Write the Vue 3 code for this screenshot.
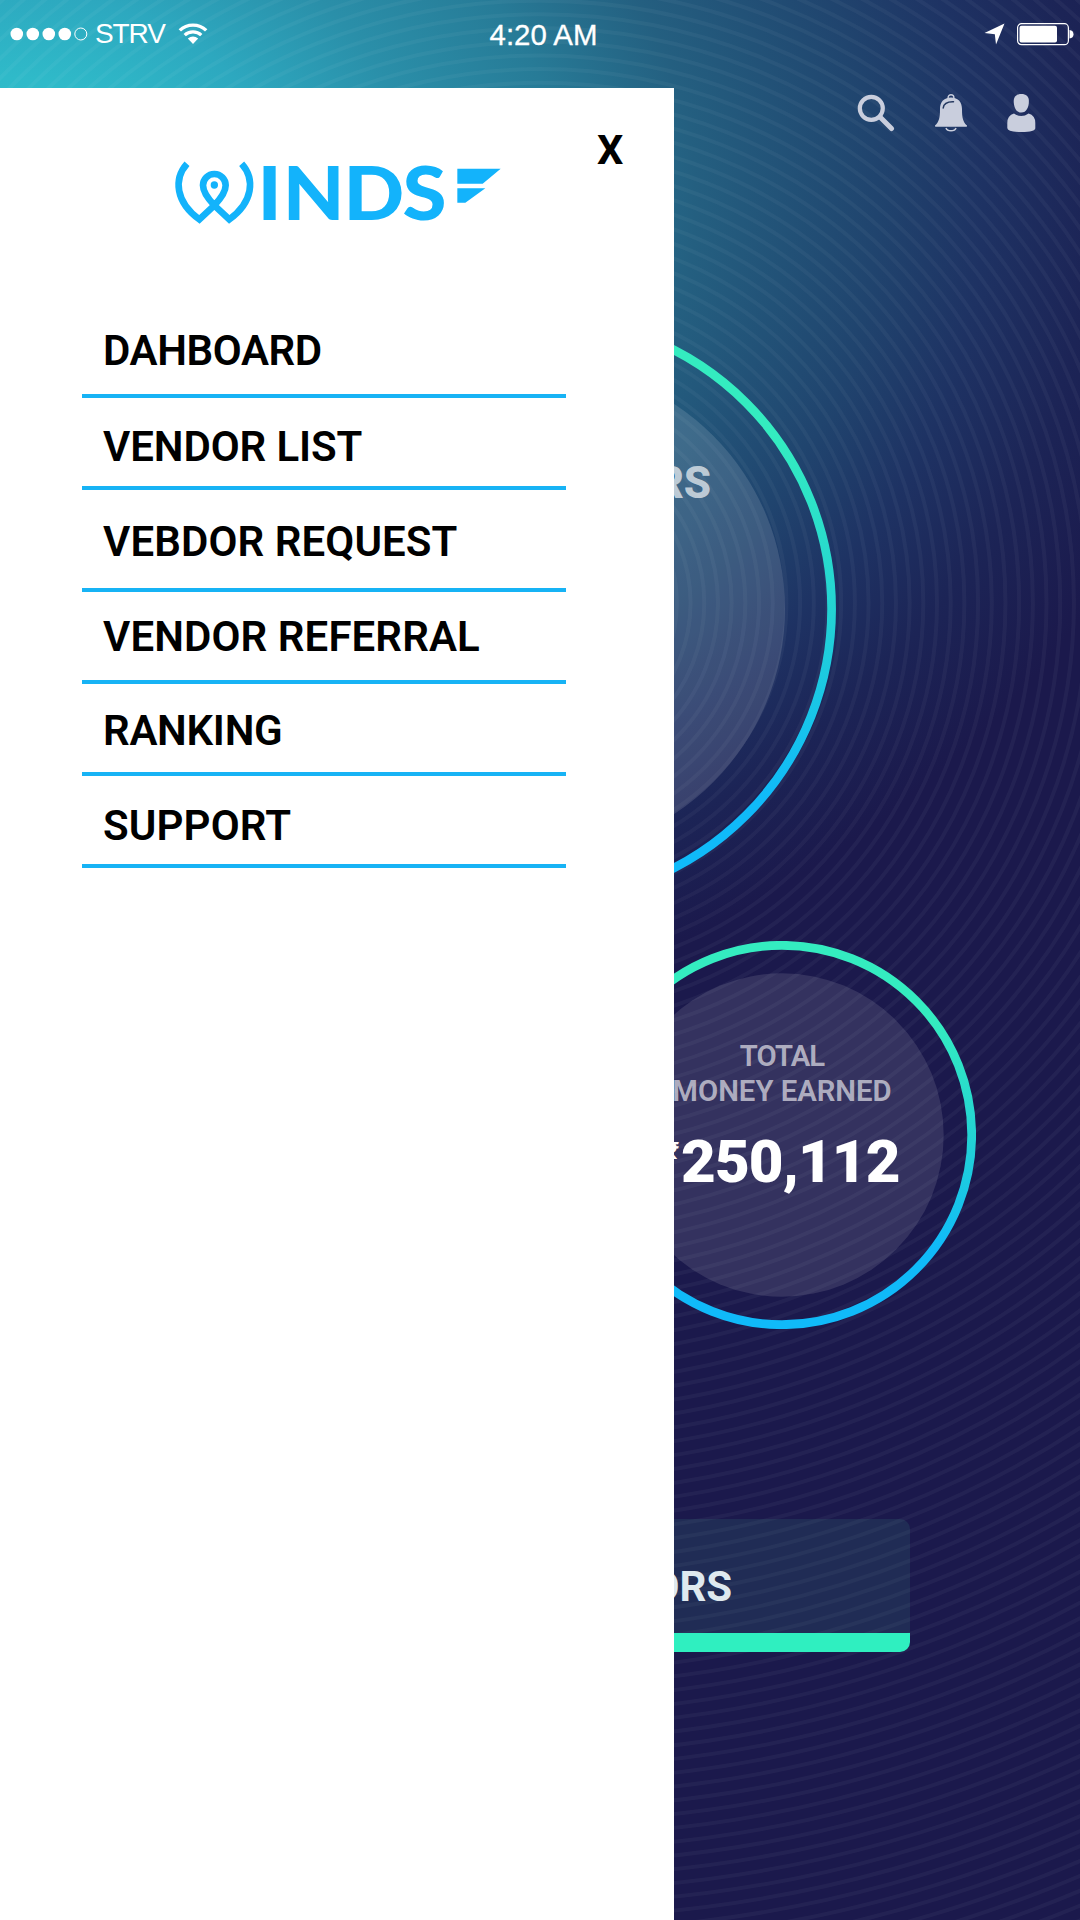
<script setup>
const menu = [
  { label: 'DAHBOARD', height: 88, top: 16, spacing: -0.4 },
  { label: 'VENDOR LIST', height: 92, top: 23.5, spacing: -0.1 },
  { label: 'VEBDOR REQUEST', height: 102, top: 27, spacing: 0.1 },
  { label: 'VENDOR REFERRAL', height: 92, top: 19.5, spacing: 0.1 },
  { label: 'RANKING', height: 92, top: 22, spacing: -0.3 },
  { label: 'SUPPORT', height: 92, top: 24.5, spacing: 0.15 }
]
const ripples = Array.from({ length: 108 }, (_, i) => (i + 1) * 13.69)
</script>

<template>
  <div class="screen">
    <svg class="ripples" width="1080" height="1920" viewBox="0 0 1080 1920">
      <circle v-for="r in ripples" :key="r" cx="540" cy="603" :r="r" />
    </svg>

    <header class="status">
      <div class="carrier">
        <svg width="80" height="16" viewBox="0 0 80 16">
          <circle v-for="n in 4" :key="n" :cx="n * 16 - 9.2" cy="8" r="6.3" fill="#fff" />
          <circle cx="70.8" cy="8" r="6" fill="none" stroke="#fff" stroke-width="1" />
        </svg>
        <span class="net">STRV</span>
        <svg width="30" height="22" viewBox="0 0 30 22">
          <path d="M1.8 7.4C9 .3 21 .3 28.2 7.4" fill="none" stroke="#fff" stroke-width="3.4" />
          <path d="M6.7 12.2C11.2 7.8 18.8 7.8 23.3 12.2" fill="none" stroke="#fff" stroke-width="3.2" />
          <path d="M9.8 15.5Q15 11.7 20.2 15.5L15 21Z" fill="#fff" />
        </svg>
      </div>
      <span class="clock">4:20 AM</span>
      <div class="power">
        <svg width="22" height="22" viewBox="0 0 22 22"><path d="M20.5 .5 12 21.5 10.8 11.2 .5 10Z" fill="#fff" /></svg>
        <svg width="58" height="24" viewBox="0 0 58 24">
          <rect x="1.6" y="1.7" width="50.8" height="21" rx="4" fill="none" stroke="#fff" stroke-width="1.2" />
          <rect x="3.5" y="3.8" width="37.5" height="16.8" rx="2" fill="#fff" />
          <path d="M53.5 8q4 .6 4 4.3t-4 4.3Z" fill="#fff" />
        </svg>
      </div>
    </header>

    <main class="dash">
      <nav class="tools">
        <svg width="38" height="40" viewBox="0 0 38 40">
          <circle cx="14.3" cy="15.3" r="11.5" fill="none" stroke="#c9cedd" stroke-width="4.2" />
          <path d="M23.5 24.5 34.5 35.5" stroke="#c9cedd" stroke-width="5" stroke-linecap="round" />
        </svg>
        <svg width="34" height="40" viewBox="0 0 34 40">
          <circle cx="17" cy="4.6" r="2.9" fill="none" stroke="#c9cedd" stroke-width="1.4" />
          <path d="M17 4.5C9.5 4.5 6 9.5 6 16C6 25 5 29 1 32.5Q.5 33.8 2 33.8H32Q33.5 33.8 33 32.5C29 29 28 25 28 16C28 9.5 24.5 4.5 17 4.5Z" fill="#c9cedd" />
          <path d="M9.2 15Q10 8.5 19.5 8.8" fill="none" stroke="#24385f" stroke-width="1.5" stroke-linecap="round" />
          <path d="M12 35Q13 37.8 17 37.8T22 35" fill="none" stroke="#c9cedd" stroke-width="1.5" />
        </svg>
        <svg width="30" height="40" viewBox="0 0 30 40">
          <path d="M15.3 1C20 1 22.9 3.3 22.9 8C22.9 14 20.5 19.6 15.3 19.6S7.7 14 7.7 8C7.7 3.3 10.6 1 15.3 1Z" fill="#c9cedd" />
          <path d="M8 20.5Q15.3 25.5 22.6 20.5Q29.3 22.5 29.3 30V35Q29.3 39 15.3 39T1.3 35V30Q1.3 22.5 8 20.5Z" fill="#c9cedd" />
        </svg>
      </nav>

      <section class="dial big">
        <svg class="ring" viewBox="0 0 592 592">
          <defs>
            <linearGradient id="ringBig" x1="0" y1="0" x2="0" y2="1">
              <stop offset=".2" stop-color="#34ecc0" /><stop offset=".5" stop-color="#23d3d3" /><stop offset=".82" stop-color="#10baf9" />
            </linearGradient>
          </defs>
          <circle cx="296" cy="296" r="291.6" fill="none" stroke="url(#ringBig)" stroke-width="8.7" />
          <circle cx="296" cy="296" r="245" fill="#fff" fill-opacity=".13" />
        </svg>
        <h2>TOTAL VENDORS</h2>
      </section>

      <section class="dial small">
        <svg class="ring" viewBox="0 0 388 388">
          <defs>
            <linearGradient id="ringSmall" x1="0" y1="0" x2="0" y2="1">
              <stop offset=".2" stop-color="#34ecc0" /><stop offset=".5" stop-color="#23d3d3" /><stop offset=".8" stop-color="#10baf9" />
            </linearGradient>
          </defs>
          <circle cx="194" cy="194" r="189.7" fill="none" stroke="url(#ringSmall)" stroke-width="8.7" />
          <circle cx="194" cy="194" r="161.7" fill="#fff" fill-opacity=".11" />
        </svg>
        <p class="caption"><span class="tight">TOTAL</span><br />MONEY EARNED</p>
        <p class="amount"><span class="cur">₹</span><b>250,112</b></p>
      </section>

      <button class="cta">VIEW ALL VENDORS</button>
    </main>

    <aside class="drawer">
      <div class="top">
        <svg class="logo" width="330" height="66" viewBox="40 118 990 198">
          <path d="M79 129C38 175 45 245 116 296L161 254C185 229 195 212 195 194A34 34 0 0 0 127 194C127 212 137 229 161 254L206 296C277 245 284 175 243 129" fill="none" stroke="#13b3fb" stroke-width="20" />
          <circle cx="161" cy="193" r="11" fill="#13b3fb" />
          <text class="word" y="297" x="270 341 510 675" transform="scale(1.075 1)">INDS</text>
          <path d="M890 144H1020L966 189H890ZM890 203H974L914 246H890Z" fill="#13b3fb" />
        </svg>
        <span class="close">X</span>
      </div>
      <ul class="menu">
        <li v-for="m in menu" :key="m.label" :style="{ height: m.height + 'px', paddingTop: m.top + 'px', letterSpacing: m.spacing + 'px' }">{{ m.label }}</li>
      </ul>
    </aside>
  </div>
</template>

<style>
body { margin: 0; }
</style>

<style scoped>
* { box-sizing: border-box; }
.screen {
  position: relative;
  width: 1080px;
  height: 1920px;
  overflow: hidden;
  display: flex;
  flex-direction: column;
  font-family: Roboto, sans-serif;
  background: radial-gradient(ellipse 1200px 875px at 0 200px, #30c0cd 0, #2fbac9 14%, #2da8bf 24%, #2a8fa9 35%, #277b97 47%, #245f80 58%, #20446e 73%, #1e3263 82%, #1c2456 91%, #1b194c 102%);
}
.ripples { position: absolute; left: 0; top: 0; }
.ripples circle { fill: none; stroke: #fff; stroke-opacity: .038; stroke-width: 4; }
svg { display: block; flex: none; }
.status {
  position: relative;
  height: 88px;
  display: flex;
  justify-content: space-between;
  padding: 0 6px 0 10px;
  color: #fff;
  font: 28px/32px "Liberation Sans", Arial, sans-serif;
}
.carrier, .power { display: flex; width: 420px; align-items: center; height: 32px; margin-top: 18px; }
.net { margin: 0 13px 0 5px; letter-spacing: -1.1px; }
.clock { margin: 19px 0 0 3px; width: 220px; text-align: center; font-size: 29.4px; -webkit-text-stroke: .3px #fff; }
.power { justify-content: flex-end; gap: 10px; }
.dash { position: relative; flex: 1; display: flex; flex-direction: column; align-items: center; }
.tools { align-self: flex-end; display: flex; margin: 5px 44px 0 0; }
.tools svg + svg { margin-left: 38.5px; }
.dial { position: relative; display: flex; flex-direction: column; align-items: center; }
.ring { position: absolute; inset: 0; width: 100%; height: 100%; }
.big { width: 592px; height: 592px; margin-top: 180px; padding-top: 144px; }
.big h2 { position: relative; margin: 0; font: 800 44px/52px Roboto, sans-serif; letter-spacing: -.2px; color: rgba(255,255,255,.68); }
.small { width: 388px; height: 388px; margin: 36px 0 0 484px; padding-top: 98px; }
.caption { position: relative; margin: 0; text-align: center; font: 600 29.3px/35px Roboto, sans-serif; color: rgba(255,255,255,.62); }
.tight { letter-spacing: -.9px; }
.amount { position: relative; margin: 18px 0 0; display: flex; align-items: flex-start; font-size: 60px; line-height: 70px; color: #fff; }
.amount b { font-weight: 900; letter-spacing: -.9px; }
.cur { margin: 0 2px 0 2px; font-size: 24px; line-height: 48px; font-weight: 800; }
.cta {
  width: 740px; height: 133px; margin-top: 190px; padding: 21px 0 0;
  border: 0; border-bottom: 19px solid #2fefc0; border-radius: 10px;
  background: rgba(80,215,165,.1); background-clip: padding-box;
  color: #dfe9ef; font: 700 42px/50px Roboto, sans-serif;
}
.drawer { position: absolute; left: 0; top: 88px; width: 674px; height: 1832px; background: #fff; }
.top { display: flex; align-items: flex-start; height: 218px; padding: 72px 0 0 173.5px; }
.logo { overflow: visible; }
.word { font: 900 223px Lato, sans-serif; fill: #13b3fb; }
.close { margin: -35px 0 0 93.5px; font: 700 41.5px/50px Roboto, sans-serif; color: #000; }
.menu { list-style: none; margin: 0; padding: 4px 0 0 82px; }
.menu li {
  width: 484px; padding-left: 21px; border-bottom: 4px solid #17b3f5;
  font: 600 42px/50px Roboto, sans-serif; color: #000; white-space: nowrap;
}
</style>
